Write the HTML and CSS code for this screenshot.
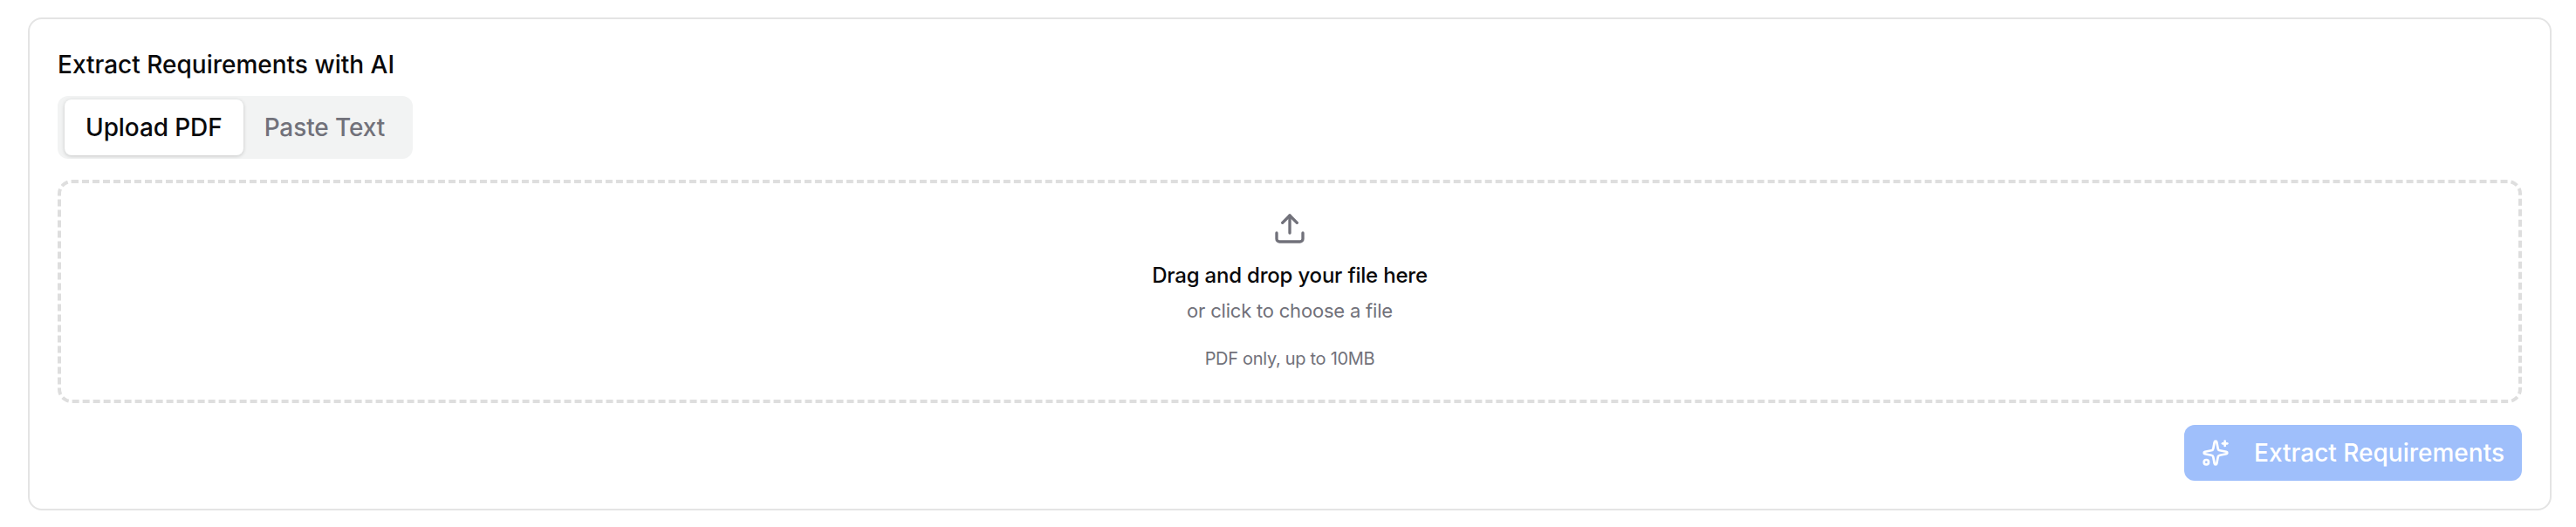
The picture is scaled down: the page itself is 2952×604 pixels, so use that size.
FILE: index.html
```html
<!DOCTYPE html>
<html lang="en">
<head>
    <meta charset="UTF-8">
    <meta name="viewport" content="width=device-width, initial-scale=1.0">
    <title>Extract Requirements with AI</title>
    <link rel="stylesheet" href="styles.css">
</head>
<body>
    <section class="card">
        <h2 class="card-title">Extract Requirements with AI</h2>
        <div class="tabs">
            <button class="tab tab-active" type="button">Upload PDF</button>
            <button class="tab" type="button">Paste Text</button>
        </div>
        <div class="dropzone">
            <svg class="upload-icon" viewBox="0 0 24 24" fill="none" stroke="currentColor" stroke-width="2" stroke-linecap="round" stroke-linejoin="round">
                <path d="M12 3v12"/>
                <path d="m17 8-5-5-5 5"/>
                <path d="M21 15v4a2 2 0 0 1-2 2H5a2 2 0 0 1-2-2v-4"/>
            </svg>
            <p class="drop-title">Drag and drop your file here</p>
            <p class="drop-sub">or click to choose a file</p>
            <p class="drop-note">PDF only, up to 10MB</p>
        </div>
        <div class="actions">
            <button class="extract-btn" type="button" disabled>
                <svg class="sparkle-icon" viewBox="0 0 24 24" fill="none" stroke="currentColor" stroke-width="2" stroke-linecap="round" stroke-linejoin="round">
                    <path d="M11.017 2.814a1 1 0 0 1 1.966 0l1.051 5.558a2 2 0 0 0 1.594 1.594l5.558 1.051a1 1 0 0 1 0 1.966l-5.558 1.051a2 2 0 0 0-1.594 1.594l-1.051 5.558a1 1 0 0 1-1.966 0l-1.051-5.558a2 2 0 0 0-1.594-1.594l-5.558-1.051a1 1 0 0 1 0-1.966l5.558-1.051a2 2 0 0 0 1.594-1.594z"/>
                    <path d="M20 2v4"/>
                    <path d="M22 4h-4"/>
                    <circle cx="4" cy="20" r="2"/>
                </svg>
                Extract Requirements
            </button>
        </div>
    </section>
</body>
</html>
```

FILE: styles.css
```css
* {
    box-sizing: border-box;
}
body {
    margin: 0;
    padding: 20px 28px 20px 32px;
    background-color: #fff;
    font-family: Inter, "Noto Sans", sans-serif;
    color: #09090b;
}
.card {
    border: 2px solid #e4e4e4;
    border-radius: 16px;
    padding: 32px;
}
.card-title {
    margin: 2px 0 18px;
    font-size: 28px;
    line-height: 36px;
    font-weight: 500;
}
.tabs {
    display: inline-flex;
    padding: 4px 8px;
    border-radius: 12px;
    background-color: #f2f3f3;
    vertical-align: top;
}
.tab {
    height: 64px;
    padding: 0 24px;
    border: none;
    border-radius: 8px;
    background: none;
    font-family: inherit;
    font-size: 28px;
    font-weight: 500;
    letter-spacing: -0.1px;
    color: #71717a;
}
.tab-active {
    background-color: #fff;
    color: #09090b;
    box-shadow: 0 1px 4px rgba(0,0,0,0.18);
}
.dropzone {
    display: flex;
    flex-direction: column;
    align-items: center;
    height: 256px;
    margin-top: 24px;
    padding-top: 32px;
    border: 4px dashed #dedede;
    border-radius: 16px;
}
.upload-icon {
    width: 40px;
    height: 40px;
    color: #71717a;
}
.drop-title {
    margin: 18px 0 0;
    font-size: 24px;
    line-height: 32px;
    font-weight: 500;
    letter-spacing: -0.2px;
}
.drop-sub {
    margin: 8px 0 0;
    font-size: 22px;
    line-height: 32px;
    letter-spacing: -0.2px;
    color: #71717a;
}
.drop-note {
    margin: 25px 0 0;
    font-size: 20px;
    line-height: 28px;
    letter-spacing: -0.3px;
    color: #71717a;
}
.actions {
    display: flex;
    justify-content: flex-end;
    margin-top: 25px;
}
.extract-btn {
    display: flex;
    align-items: center;
    gap: 28px;
    height: 64px;
    padding: 0 20px;
    border: none;
    border-radius: 12px;
    background-color: #9fbffb;
    font-family: inherit;
    font-size: 28px;
    font-weight: 500;
    color: #fff;
}
.sparkle-icon {
    width: 32px;
    height: 32px;
}
```
